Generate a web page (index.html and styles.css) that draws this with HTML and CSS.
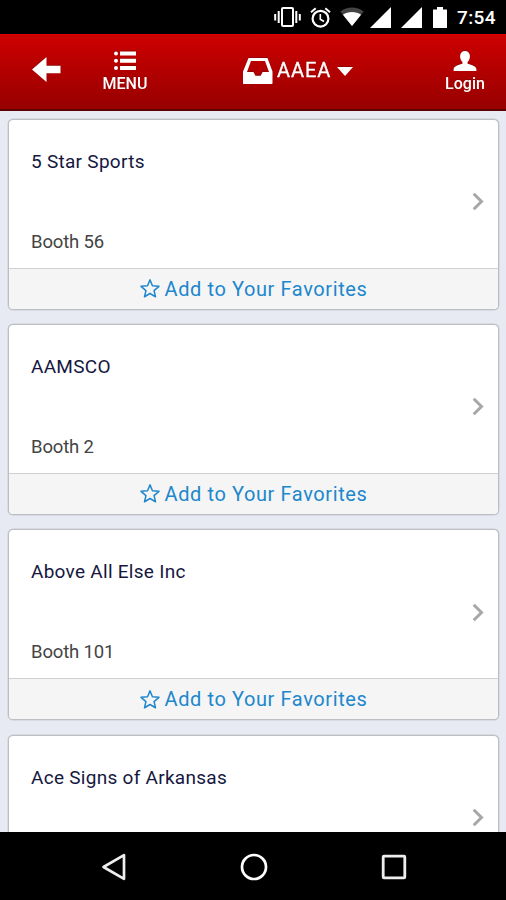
FILE: index.html
```html
<!DOCTYPE html>
<html lang="en">
<head>
<meta charset="utf-8">
<title>AAEA Exhibitors</title>
<link rel="stylesheet" href="styles.css">
</head>
<body>
<svg class="defs" width="0" height="0" aria-hidden="true">
  <symbol id="star" viewBox="0 0 20 19"><path d="M10 .9l2.450 5.900 6.500.55-4.900 4.250 1.450 6.150L10 14.500l-5.500 3.250 1.450-6.150L1.050 7.350l6.500-.55z" fill="none" stroke="currentColor" stroke-width="1.500" stroke-linejoin="round"/></symbol>
  <symbol id="chevron" viewBox="0 0 12 19"><path d="M1.700 1.700l7.800 7.800-7.800 7.800" fill="none" stroke="currentColor" stroke-width="3"/></symbol>
</svg>
<div class="screen">
  <div class="status">
    <svg width="27" height="20" viewBox="0 0 27 20" fill="none" stroke="#fff"><rect x="8" y="1" width="11" height="18" rx="1" stroke-width="2"/><path d="M4.700 4v12M22.300 4v12M1.200 7v6.500M25.800 7v6.500" stroke-width="2"/></svg>
    <svg class="alarm" width="21" height="21" viewBox="0 0 21 21" fill="none" stroke="#fff"><circle cx="10.500" cy="11.700" r="7.900" stroke-width="2.200"/><path d="M1 5.200L5.700 1.300M20 5.200l-4.700-3.900" stroke-width="2"/><path d="M10.300 7v5.200l3.700 2.300" stroke-width="1.600"/></svg>
    <svg class="wifi" width="24" height="20" viewBox="0 0 24 20"><path d="M12 19L.3 4.500C7-.9 17-.9 23.700 4.500z" fill="#444"/><path d="M12 19L2.900 7.700c5.200-3.700 13-3.700 18.200 0z" fill="#fff"/></svg>
    <svg class="signal" width="21" height="21" viewBox="0 0 21 21"><path d="M0 21L21 0v21z" fill="#fff"/></svg>
    <svg class="signal" width="21" height="21" viewBox="0 0 21 21"><path d="M0 21L21 0v21z" fill="#fff"/></svg>
    <svg class="battery" width="14" height="21" viewBox="0 0 14 21"><path d="M4 0h6v2.500h4V21H0V2.500h4z" fill="#fff"/></svg>
    <span class="clock">7:54</span>
  </div>
  <header class="bar">
    <svg class="back" width="29" height="25" viewBox="0 0 29 25"><path d="M0 12.500L14.500 0v8.700H28.500v7.600h-14V25z" fill="#fff"/></svg>
    <div class="menu">
      <svg width="22" height="20" viewBox="0 0 22 20" fill="#fff"><circle cx="2" cy="2.500" r="2"/><circle cx="2" cy="9.700" r="2"/><circle cx="2" cy="16.900" r="2"/><path d="M6 .5h16v4H6zM6 7.700h16v4H6zM6 14.900h16v4H6z"/></svg>
      <span class="label">MENU</span>
    </div>
    <div class="title">
      <svg width="30" height="26" viewBox="0 0 30 26"><path fill="#fff" fill-rule="evenodd" d="M5.500 0h19l5 13.500V25c0 .6-.4 1-1 1h-27.500c-.6 0-1-.4-1-1V13.500zM8 3L4 14h6.500l1.900 3.800h5.300l1.900-3.800H26L22 3z"/></svg>
      <span class="event">AAEA</span>
      <svg class="caret" width="16" height="9" viewBox="0 0 16 9"><path d="M0 0h16L8 9z" fill="#fff"/></svg>
    </div>
    <div class="login">
      <svg width="24" height="20" viewBox="0 0 24 20"><path fill="#fff" d="M12 0c3 0 4.900 2 4.900 5 0 2.700-.9 4.800-2.400 6v1.600c1.600 1.100 8.500 1.900 8.900 5.400V20H.6v-2c.4-3.500 7.300-4.300 8.900-5.400V11C8 9.800 7.100 7.700 7.100 5c0-3 1.900-5 4.900-5z"/></svg>
      <span class="label">Login</span>
    </div>
  </header>
  <main class="list">
    <article class="card">
      <div class="info"><div><h2>5 Star Sports</h2><p>Booth 56</p></div><svg class="chev" width="12" height="19"><use href="#chevron"/></svg></div>
      <div class="fav"><svg width="20" height="19"><use href="#star"/></svg><span>Add to Your Favorites</span></div>
    </article>
    <article class="card">
      <div class="info"><div><h2>AAMSCO</h2><p>Booth 2</p></div><svg class="chev" width="12" height="19"><use href="#chevron"/></svg></div>
      <div class="fav"><svg width="20" height="19"><use href="#star"/></svg><span>Add to Your Favorites</span></div>
    </article>
    <article class="card">
      <div class="info"><div><h2>Above All Else Inc</h2><p>Booth 101</p></div><svg class="chev" width="12" height="19"><use href="#chevron"/></svg></div>
      <div class="fav"><svg width="20" height="19"><use href="#star"/></svg><span>Add to Your Favorites</span></div>
    </article>
    <article class="card">
      <div class="info"><div><h2>Ace Signs of Arkansas</h2></div><svg class="chev" width="12" height="19"><use href="#chevron"/></svg></div>
    </article>
  </main>
  <nav class="nav">
    <svg width="26" height="28" viewBox="0 0 26 28"><path d="M23 2.200v23.600L2.500 14z" fill="none" stroke="#eee" stroke-width="2.700" stroke-linejoin="round"/></svg>
    <svg width="28" height="28" viewBox="0 0 28 28"><circle cx="14" cy="14" r="12" fill="none" stroke="#fff" stroke-width="2.700"/></svg>
    <svg width="26" height="26" viewBox="0 0 26 26"><rect x="2.200" y="2.200" width="21.600" height="21.600" rx=".8" fill="none" stroke="#eee" stroke-width="2.800"/></svg>
  </nav>
</div>
</body>
</html>
```
FILE: styles.css
```css
* { box-sizing: border-box; margin: 0; }
body { font-family: Roboto, "Liberation Sans", sans-serif; background: #000; }
svg { display: block; flex: none; }
.defs { height: 0; }
.screen { display: flex; flex-direction: column; width: 506px; height: 900px; overflow: hidden; }

.status { display: flex; align-items: center; flex: none; height: 34px; padding-left: 274px; background: #000; color: #fff; }
.alarm { margin-left: 9px; }
.wifi { margin-left: 9px; }
.signal { margin-left: 6px; }
.signal + .signal { margin-left: 10px; }
.battery { margin-left: 11px; }
.clock { margin-left: 10px; font-size: 19px; font-weight: 500; line-height: 34px; letter-spacing: .4px; padding-top: 2px; }

.bar { display: flex; flex: none; height: 77px; background: linear-gradient(#cd0000, #970000); border-top: 1px solid #e00000; border-bottom: 2px solid #5c0000; color: #fff; }
.bar svg, .bar span { filter: drop-shadow(0 -1px 0 rgba(80, 0, 0, .35)); }
.back { margin: 22px 0 0 32px; }
.menu { display: flex; flex-direction: column; align-items: center; width: 62px; margin-left: 33px; padding-top: 16px; }
.label { font-size: 16px; font-weight: 500; line-height: 20px; margin-top: 3px; }
.title { display: flex; align-items: center; height: 26px; margin: 23px 0 0 87px; }
.event { font-size: 20px; line-height: 24px; padding-bottom: 2px; margin-left: 4px; letter-spacing: .9px; -webkit-text-stroke: .3px #fff; }
.caret { margin-left: 6px; }
.login { display: flex; flex-direction: column; align-items: center; width: 60px; margin-left: auto; margin-right: 11px; padding-top: 16px; }

.list { flex: 1; min-height: 0; overflow: hidden; display: flex; flex-direction: column; gap: 14.4px; padding: 7.5px 7px 0 8px; background: #e7eaf3; }
.card { flex: none; height: 191px; border: 1px solid #bcbec3; border-radius: 5px; background: #fff; overflow: hidden; box-shadow: 0 0 0 .5px #c9cbd1; }
.info { display: flex; justify-content: space-between; height: 148px; padding-left: 22px; }
.info h2 { margin-top: 29px; font-size: 19px; font-weight: 400; line-height: 26px; letter-spacing: .28px; color: #15173f; }
.info p { margin-top: 54px; font-size: 18.5px; line-height: 26px; letter-spacing: -.15px; color: #444; }
.chev { margin: 72.5px 14px 0 0; color: #a5a7a9; }
.fav { display: flex; align-items: center; justify-content: center; gap: 5px; height: 41px; border-top: 1px solid #cfd1d4; background: #f5f5f6; color: #2087cc; font-size: 20px; letter-spacing: .6px; }

.nav { display: flex; flex: none; justify-content: space-between; align-items: center; height: 68px; padding: 2px 99px 0 101px; background: #000; }
```
